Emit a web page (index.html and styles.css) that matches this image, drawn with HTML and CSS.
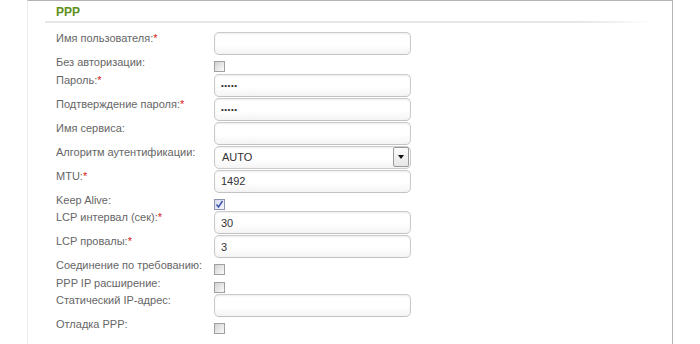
FILE: index.html
```html
<!DOCTYPE html>
<html lang="ru">
<head>
  <meta charset="UTF-8" />
  <title>PPP</title>
<link rel="stylesheet" href="styles.css">
</head>
<body>

  <div class="frame">
    <div class="section">
      <div class="section-title">PPP</div>
      <div class="title-line"></div>

      <div class="rows">
        <div class="row">
          <label>Имя пользователя:<span class="req">*</span></label>
          <input class="text" type="text" value="">
        </div>
        <div class="row check-row">
          <label>Без авторизации:</label>
          <span class="cb"></span>
        </div>
        <div class="row">
          <label>Пароль:<span class="req">*</span></label>
          <input class="text pass" type="password" value="12345">
        </div>
        <div class="row">
          <label>Подтверждение пароля:<span class="req">*</span></label>
          <input class="text pass" type="password" value="12345">
        </div>
        <div class="row">
          <label>Имя сервиса:</label>
          <input class="text" type="text" value="">
        </div>
        <div class="row">
          <label>Алгоритм аутентификации:</label>
          <div class="select">
            <span class="select-value">AUTO</span>
            <span class="select-btn"><span class="arrow"></span></span>
          </div>
        </div>
        <div class="row">
          <label>MTU:<span class="req">*</span></label>
          <input class="text" type="text" value="1492">
        </div>
        <div class="row check-row">
          <label>Keep Alive:</label>
          <span class="cb checked">
            <svg width="9" height="9" viewBox="0 0 9 9"><path d="M1.5 4.5 L3.5 7 L7.5 1" fill="none" stroke="#3a4fa8" stroke-width="1.4"/></svg>
          </span>
        </div>
        <div class="row">
          <label>LCP интервал (сек):<span class="req">*</span></label>
          <input class="text" type="text" value="30">
        </div>
        <div class="row">
          <label>LCP провалы:<span class="req">*</span></label>
          <input class="text" type="text" value="3">
        </div>
        <div class="row check-row">
          <label>Соединение по требованию:</label>
          <span class="cb"></span>
        </div>
        <div class="row check-row">
          <label>PPP IP расширение:</label>
          <span class="cb"></span>
        </div>
        <div class="row">
          <label>Статический IP-адрес:</label>
          <input class="text" type="text" value="">
        </div>
        <div class="row check-row">
          <label>Отладка PPP:</label>
          <span class="cb"></span>
        </div>
      </div>
    </div>
  </div>

</body>
</html>
```

FILE: styles.css
```css
* {
  box-sizing: border-box;
  font-family: 'Liberation Sans', Arial, sans-serif;
}

body {
  background: white;
  margin: 0;
  padding: 0;
}

.frame {
  margin-left: 27px;
  width: 646px;
  min-height: 400px;
  border-top: 1px solid #b4b4b4;
  border-right: 1px solid #b4b4b4;
  border-left: 1px solid #ececec;
}

.section {
  margin: 0 19px 0 17px;
}

.section-title {
  color: #5e8e22;
  font-weight: bold;
  font-size: 12px;
  line-height: 17px;
  height: 20px;
  padding: 3px 0 0 11px;
}

.title-line {
  height: 2px;
  background: linear-gradient(to right, #e6e6e6 0%, #e6e6e6 88%, rgba(230, 230, 230, 0) 100%);
}

.rows {
  padding-top: 8px;
}

.row {
  display: flex;
  align-items: flex-start;
  height: 24px;
}

.row.check-row {
  height: 17.5px;
}

.row label {
  width: 169px;
  padding: 1px 0 0 11px;
  font-size: 11px;
  line-height: 13px;
  color: #666;
  white-space: nowrap;
}

.req {
  color: #d42020;
}

input.text {
  width: 197px;
  height: 23px;
  margin: 1px 0 0 0;
  padding: 0 6px;
  border: 1px solid #cbcbcb;
  border-bottom-color: #c2c2c2;
  border-radius: 5px;
  background: linear-gradient(to bottom, #ffffff 0%, #ffffff 55%, #f4f4f4 100%);
  box-shadow: inset 0 1px 2px rgba(0, 0, 0, 0.08);
  font-size: 11px;
  color: #333;
  outline: none;
}

input.pass {
  font-size: 8px;
  letter-spacing: 0.5px;
}

.select {
  width: 197px;
  height: 23px;
  margin-top: 1px;
  display: flex;
  align-items: center;
  justify-content: space-between;
  padding: 0 1px 0 7px;
  border: 1px solid #cbcbcb;
  border-radius: 5px;
  background: linear-gradient(to bottom, #ffffff 0%, #ffffff 55%, #f4f4f4 100%);
  box-shadow: inset 0 1px 2px rgba(0, 0, 0, 0.08);
}

.select-value {
  font-size: 11px;
  color: #333;
}

.select-btn {
  width: 16px;
  height: 20px;
  display: flex;
  align-items: center;
  justify-content: center;
  border: 1px solid #9a9a9a;
  border-radius: 2px;
  background: linear-gradient(to bottom, #fcfcfc 0%, #e6e6e6 100%);
}

.arrow {
  width: 0;
  height: 0;
  border-left: 3px solid transparent;
  border-right: 3px solid transparent;
  border-top: 4px solid #111;
}

.cb {
  width: 11px;
  height: 11px;
  margin-top: 6px;
  display: flex;
  align-items: center;
  justify-content: center;
  border: 1px solid #a0a0a0;
  background: linear-gradient(135deg, #d2d2d2 0%, #efefef 70%, #fafafa 100%);
}

.cb.checked {
  border-color: #8f94b0;
  background: linear-gradient(135deg, #d6daf0 0%, #f4f5fb 100%);
}
```
